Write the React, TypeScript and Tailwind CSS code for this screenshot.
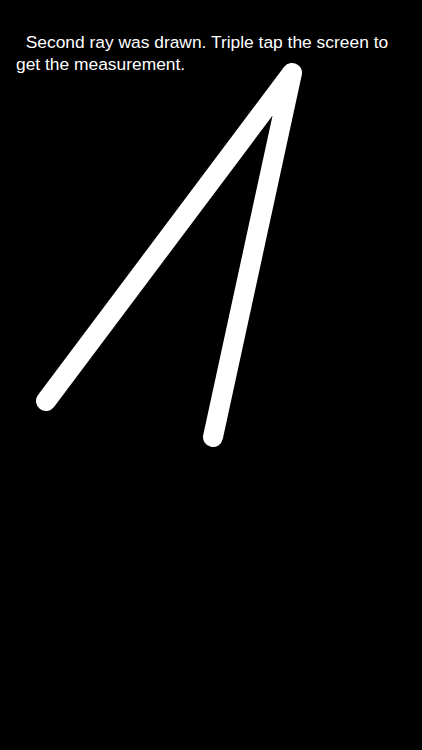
export default function App() {
  return (
    <div className="relative h-[750px] w-full overflow-hidden bg-black">
      <p className="relative z-10 px-4 pt-[31px] text-[17.4px] leading-[22px] text-white [font-family:'Liberation_Sans',Arial,sans-serif]">
        {'\u00a0 Second ray was drawn. Triple tap the screen to get the measurement.'}
      </p>
      <svg className="absolute inset-0" width="422" height="750" viewBox="0 0 422 750">
        <polyline
          points="46,401 292,73 213,437"
          fill="none"
          stroke="#fff"
          strokeWidth="20"
          strokeLinecap="round"
          strokeLinejoin="round"
        />
      </svg>
    </div>
  );
}
